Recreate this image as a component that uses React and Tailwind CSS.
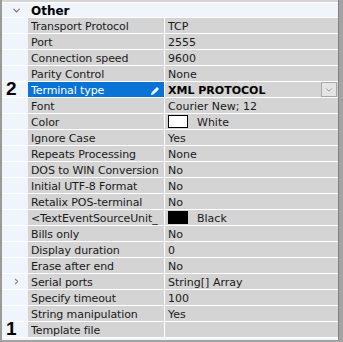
import { ChevronDown, ChevronRight } from 'lucide-react'

const ROWS = [
  { name: 'Transport Protocol', value: 'TCP' },
  { name: 'Port', value: '2555' },
  { name: 'Connection speed', value: '9600' },
  { name: 'Parity Control', value: 'None' },
  { name: 'Terminal type', value: 'XML PROTOCOL', selected: true, marker: '2' },
  { name: 'Font', value: 'Courier New; 12' },
  { name: 'Color', value: 'White', swatch: 'bg-white' },
  { name: 'Ignore Case', value: 'Yes' },
  { name: 'Repeats Processing', value: 'None' },
  { name: 'DOS to WIN Conversion', value: 'No' },
  { name: 'Initial UTF-8 Format', value: 'No' },
  { name: 'Retalix POS-terminal', value: 'No' },
  { name: '<TextEventSourceUnit_', value: 'Black', swatch: 'bg-black' },
  { name: 'Bills only', value: 'No' },
  { name: 'Display duration', value: '0' },
  { name: 'Erase after end', value: 'No' },
  { name: 'Serial ports', value: 'String[] Array', expandable: true },
  { name: 'Specify timeout', value: '100' },
  { name: 'String manipulation', value: 'Yes' },
  { name: 'Template file', value: '', marker: '1' },
]

function Pencil() {
  return (
    <svg width="10" height="10" viewBox="0 0 10 10" className="shrink-0">
      <path d="M1 9 L2 6 L7 1 L9 3 L4 8 Z" fill="white" />
      <path d="M1 9 L2 6 L4 8 Z" fill="#cfe3f7" />
    </svg>
  )
}

function Row({ row }) {
  return (
    <div className="flex h-[16px] border-b border-white">
      <div className="w-[26px] shrink-0 relative flex items-center">
        {row.marker && (
          <span className="absolute left-[4px] top-[-3px] text-[19px] font-bold leading-[20px] text-black font-['Liberation_Sans',sans-serif]">
            {row.marker}
          </span>
        )}
        {row.expandable && <ChevronRight className="ml-[10px] w-[9px] h-[9px] text-[#8a8a8a]" strokeWidth={3} />}
      </div>
      <div
        className={`w-[137px] shrink-0 flex items-center pt-[2px] pl-[3px] border-r border-white ${
          row.selected ? 'bg-[#0a74d6] text-white pr-[4px]' : 'bg-[#d4d4d4] text-[#1a1a1a]'
        }`}
      >
        <span className="flex-1 whitespace-nowrap overflow-hidden leading-[14px] tracking-[-0.1px]">{row.name}</span>
        {row.selected && <Pencil />}
      </div>
      <div className="flex-1 flex items-center bg-[#d4d4d4] pl-[3px] text-[#1a1a1a] min-w-0">
        {row.swatch && (
          <span className={`w-[20px] h-[13px] border border-black ${row.swatch} mr-[9px] shrink-0`} />
        )}
        <span className={`flex-1 pt-[1px] whitespace-nowrap ${row.selected ? 'font-bold text-black' : ''}`}>{row.value}</span>
        {row.selected && (
          <span className="w-[16px] h-[15px] mr-[1px] bg-[#e4e4e4] border border-[#a8a8a8] flex items-center justify-center">
            <ChevronDown className="w-[10px] h-[10px] text-[#707070]" strokeWidth={1.5} />
          </span>
        )}
      </div>
    </div>
  )
}

export default function App() {
  return (
    <div className="w-[343px] h-[342px] overflow-hidden bg-[#a3a3a3] font-['DejaVu_Sans',sans-serif] text-[11px] leading-none">
      <div className="flex h-[340px] border-l-2 border-[#9a9a9a]">
        <div className="w-[336px] bg-[#f0f4fb] flex flex-col">
          <div className="h-[2px] bg-[#d4d4d4]" />
          <div className="h-[16px] flex items-center pt-[1px] border-t border-white border-b">
            <div className="w-[26px] flex items-center">
              <ChevronDown className="ml-[9px] w-[11px] h-[11px] text-[#707070]" strokeWidth={2.5} />
            </div>
            <span className="pl-[3px] font-bold text-black text-[12px]">Other</span>
          </div>
          {ROWS.map((r) => (
            <Row key={r.name} row={r} />
          ))}
        </div>
        <div className="w-[1px] bg-[#808080]" />
      </div>
    </div>
  )
}
